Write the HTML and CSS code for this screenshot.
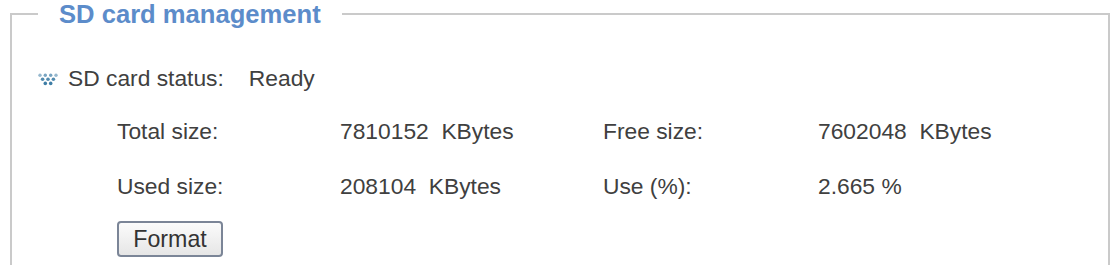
FILE: index.html
```html
<!DOCTYPE html>
<html>
<head>
<meta charset="utf-8">
<link rel="stylesheet" href="styles.css">
</head>
<body>
<fieldset class="panel">
  <legend class="panel-title">SD card management</legend>
  <div class="status-row">
    <svg class="status-icon" width="20" height="13" viewBox="0 0 20 13">
      <g fill="#3f7ea6">
        <circle cx="2" cy="2.2" r="1.7" opacity="0.55"/>
        <circle cx="7.3" cy="2.2" r="1.7" opacity="0.7"/>
        <circle cx="12.7" cy="2.2" r="1.7" opacity="0.7"/>
        <circle cx="18" cy="2.2" r="1.7" opacity="0.55"/>
        <circle cx="4.6" cy="6.2" r="1.8" opacity="0.9"/>
        <circle cx="10" cy="6.2" r="1.8" opacity="0.9"/>
        <circle cx="15.4" cy="6.2" r="1.8" opacity="0.9"/>
        <circle cx="7.3" cy="10.4" r="1.8"/>
        <circle cx="12.7" cy="10.4" r="1.8"/>
      </g>
    </svg>
    <span class="status-label">SD card status:</span>
    <span class="status-value">Ready</span>
  </div>
  <div class="info-grid">
    <span>Total size:</span>
    <span>7810152&nbsp; KBytes</span>
    <span>Free size:</span>
    <span>7602048&nbsp; KBytes</span>
    <span>Used size:</span>
    <span>208104&nbsp; KBytes</span>
    <span>Use (%):</span>
    <span>2.665 %</span>
  </div>
  <div class="actions">
    <button class="btn">Format</button>
  </div>
</fieldset>
</body>
</html>
```

FILE: styles.css
```css
html, body {
  margin: 0;
  padding: 0;
  background: #ffffff;
}

body {
  font-family: "Liberation Sans", Arial, sans-serif;
  font-size: 22.8px;
  color: #404040;
}

.panel {
  margin: 0 2px 0 10px;
  padding: 39px 0 60px 26px;
  border: 2px solid #cacaca;
  min-width: 0;
}

.panel-title {
  padding: 0 21px;
  font-size: 25.6px;
  line-height: 28px;
  font-weight: bold;
  color: #5c8cca;
}

.status-row {
  display: flex;
  align-items: center;
  height: 26px;
  line-height: 26px;
  margin-top: -2px;
}

.status-icon {
  flex: none;
  margin-right: 10px;
  margin-top: 2px;
}

.status-label {
  margin-right: 25px;
}

.info-grid {
  display: grid;
  grid-template-columns: 223px 263px 215px auto;
  row-gap: 29px;
  margin: 27px 0 0 79px;
  line-height: 26px;
}

.actions {
  margin: 22px 0 0 79px;
}

.btn {
  width: 106px;
  height: 36px;
  padding: 0;
  font-family: "Liberation Sans", Arial, sans-serif;
  font-size: 23.2px;
  color: #333333;
  background: linear-gradient(#fbfbfb, #e6e6e6);
  border: 2px solid #7b8597;
  border-radius: 4px;
}
```
